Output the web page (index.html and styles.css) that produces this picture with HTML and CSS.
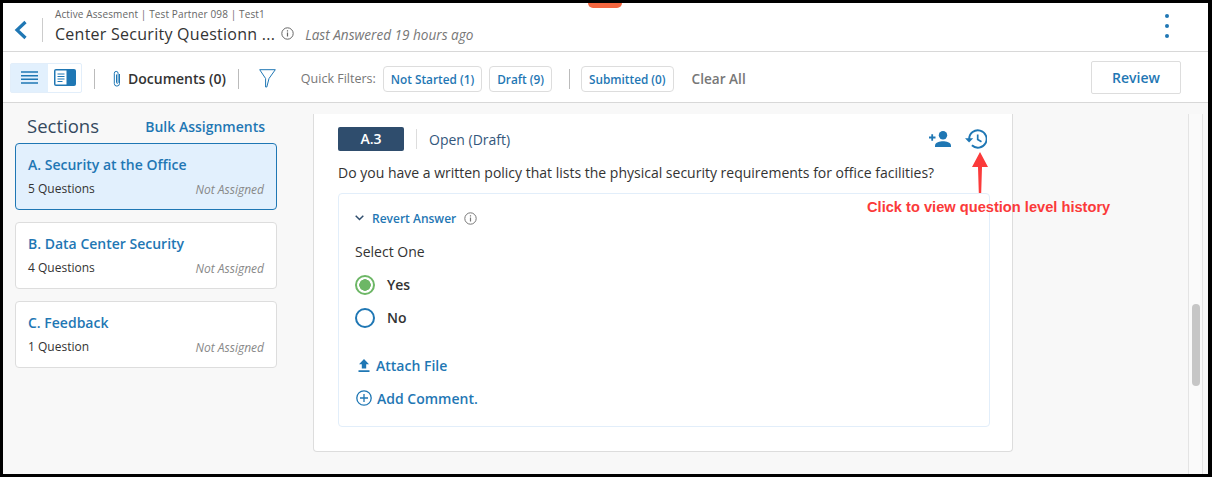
FILE: index.html
```html
<!DOCTYPE html>
<html lang="en">
<head>
    <meta charset="UTF-8">
    <title>Center Security Questionnaire</title>
    <link rel="stylesheet" href="styles.css">
</head>
<body>
    <div class="screen">
        <div class="notch"></div>

        <!-- Top header -->
        <header class="header">
            <svg class="back" width="14" height="20" viewBox="0 0 14 20"><path d="M11.5 2 3 10l8.500 8" fill="none" stroke="#1f77b4" stroke-width="3.200"/></svg>
            <div class="header-text">
                <div class="crumbs">Active Assesment | Test Partner 098 | Test1</div>
                <div class="title-row">
                    <span class="title">Center Security Questionn ...</span>
                    <svg class="info" width="13" height="13" viewBox="0 0 13 13"><circle cx="6.500" cy="6.500" r="5.700" fill="none" stroke="#666" stroke-width="1"/><path d="M6.500 5.600v4M6.500 3.200v1.300" stroke="#666" stroke-width="1.200"/></svg>
                    <span class="last-answered">Last Answered 19 hours ago</span>
                </div>
            </div>
            <div class="kebab"><i></i><i></i><i></i></div>
        </header>

        <!-- Toolbar -->
        <div class="toolbar">
            <div class="view-toggle">
                <div class="view-list">
                    <svg width="17" height="13" viewBox="0 0 17 13"><path d="M0 1h17M0 4.700h17M0 8.300h17M0 12h17" stroke="#1f77b4" stroke-width="1.400"/></svg>
                </div>
                <div class="view-split">
                    <svg width="22" height="17" viewBox="0 0 22 17"><rect width="22" height="17" rx="2" fill="#1f77b4"/><rect x="1.500" y="1.500" width="11" height="14" fill="#fff"/><path d="M3.500 5h7M3.500 7.500h7M3.500 10h7M3.500 12.500h5" stroke="#1f77b4"/></svg>
                </div>
            </div>
            <span class="sep sep-docs"></span>
            <svg class="clip" width="10" height="18" viewBox="0 0 10 18"><path d="M7.500 4v9.500a2.600 2.600 0 0 1-5.200 0V3.300a1.900 1.900 0 0 1 3.800 0v9.200a.8.8 0 0 1-1.600 0V4.500" fill="none" stroke="#1f77b4" stroke-width="1"/></svg>
            <span class="documents">Documents (0)</span>
            <span class="sep sep-funnel"></span>
            <svg class="funnel" width="17" height="19" viewBox="0 0 17 19"><path d="M.7.700h15.600L10 9.500 7.800 18H6.600V9.500z" fill="none" stroke="#1f77b4" stroke-width="1"/></svg>
            <span class="filters-label">Quick Filters:</span>
            <button class="chip">Not Started (1)</button>
            <button class="chip">Draft (9)</button>
            <span class="sep sep-submitted"></span>
            <button class="chip">Submitted (0)</button>
            <span class="clear-all">Clear All</span>
            <button class="review">Review</button>
        </div>

        <div class="content">
            <!-- Sections column -->
            <aside class="sidebar">
                <div class="sidebar-head">
                    <span class="sections-title">Sections</span>
                    <span class="bulk">Bulk Assignments</span>
                </div>
                <div class="section-card active">
                    <div class="section-name">A. Security at the Office</div>
                    <div class="section-meta"><span>5 Questions</span><em>Not Assigned</em></div>
                </div>
                <div class="section-card">
                    <div class="section-name">B. Data Center Security</div>
                    <div class="section-meta"><span>4 Questions</span><em>Not Assigned</em></div>
                </div>
                <div class="section-card">
                    <div class="section-name">C. Feedback</div>
                    <div class="section-meta"><span>1 Question</span><em>Not Assigned</em></div>
                </div>
            </aside>

            <!-- Question card -->
            <main class="question">
                <div class="question-head">
                    <span class="badge">A.3</span>
                    <span class="status">Open (Draft)</span>
                    <svg class="assign" width="22" height="16" viewBox="0 0 22 16"><circle cx="14" cy="4.300" r="4.200" fill="#1f77b4"/><path d="M6 16v-1.500c0-3 5-4.300 8-4.300s8 1.300 8 4.300V16z" fill="#1f77b4"/><path d="M0 6.500h6.500M3.200 3.300v6.500" stroke="#1f77b4" stroke-width="1.800"/></svg>
                    <svg class="history" width="22" height="20" viewBox="0 0 22 20"><path d="M4.200 10a8.700 8.700 0 1 1 2.700 6.300" fill="none" stroke="#1f77b4" stroke-width="1.900"/><path d="M0 9.300h8.200L4.100 13.600z" fill="#1f77b4"/><path d="M12.700 5.500v5l3.800 2.300" fill="none" stroke="#1f77b4" stroke-width="1.700"/></svg>
                </div>
                <p class="question-text">Do you have a written policy that lists the physical security requirements for office facilities?</p>
                <div class="answer">
                    <div class="revert">
                        <svg width="9" height="6" viewBox="0 0 9 6"><path d="M.7.800 4.500 4.500 8.300.8" fill="none" stroke="#2f4d6d" stroke-width="1.500"/></svg>
                        <span>Revert Answer</span>
                        <svg class="info" width="13" height="13" viewBox="0 0 13 13"><circle cx="6.500" cy="6.500" r="5.700" fill="none" stroke="#777" stroke-width="1"/><path d="M6.500 5.600v4M6.500 3.200v1.300" stroke="#777" stroke-width="1.200"/></svg>
                    </div>
                    <div class="select-one">Select One</div>
                    <label class="option"><span class="radio checked"></span>Yes</label>
                    <label class="option"><span class="radio"></span>No</label>
                    <div class="action attach">
                        <svg width="12" height="13" viewBox="0 0 12 13"><path d="M6 0l5 5.300H8.200v4.200H3.800V5.300H1zM.5 11.300h11V13H.5z" fill="#1f77b4"/></svg>
                        <span>Attach File</span>
                    </div>
                    <div class="action comment">
                        <svg width="16" height="16" viewBox="0 0 16 16"><circle cx="8" cy="8" r="7.200" fill="none" stroke="#1f77b4" stroke-width="1.300"/><path d="M8 4v8M4 8h8" stroke="#1f77b4" stroke-width="1.300"/></svg>
                        <span>Add Comment.</span>
                    </div>
                </div>
            </main>

            <div class="scroll-track"><div class="scroll-thumb"></div></div>
        </div>

        <!-- Red annotation over the screenshot -->
        <svg class="note-arrow" width="18" height="41" viewBox="0 0 18 41"><path d="M9 0l8 15H11l-.800 26H7.800L7 15H1z" fill="#fb3a3a"/></svg>
        <div class="note-text">Click to view question level history</div>
    </div>
</body>
</html>
```

FILE: styles.css
```css
* {
    box-sizing: border-box;
}

body {
    margin: 0;
    background: #000;
    font-family: "Open Sans", sans-serif;
    color: #333;
}

.screen {
    position: relative;
    width: 1212px;
    height: 477px;
    border: 3px solid #000;
    border-right-width: 4px;
    background: #f8f8f8;
    overflow: hidden;
    display: flex;
    flex-direction: column;
}

.notch {
    position: absolute;
    left: 585px;
    top: 0;
    width: 34px;
    height: 5px;
    background: #f4663f;
    border-radius: 0 0 6px 6px;
}

/* header */
.header {
    height: 49px;
    flex: none;
    display: flex;
    align-items: center;
    background: #fff;
    border-bottom: 1px solid #d8d8d8;
}

.back {
    margin: 5px 0 0 11px;
}

.header-text {
    margin-left: 14px;
    padding-left: 12px;
    border-left: 1px solid #ccc;
    height: 24px;
    display: flex;
    flex-direction: column;
    justify-content: center;
    margin-top: 5px;
}

.crumbs {
    font-size: 10px;
    line-height: 14px;
    color: #666;
    margin-top: -8px;
    letter-spacing: 0.12px;
}

.title-row {
    display: flex;
    align-items: center;
    margin-top: 2px;
}

.title {
    font-size: 16px;
    line-height: 22px;
    color: #333;
    letter-spacing: 0.26px;
}

.title-row .info {
    margin-left: 6px;
}

.last-answered {
    margin-left: 11px;
    font-size: 13.600px;
    font-style: italic;
    color: #777;
    margin-top: 2px;
}

.kebab {
    margin-left: auto;
    margin-right: 39px;
    margin-top: -2px;
    display: flex;
    flex-direction: column;
    gap: 6px;
}

.kebab i {
    width: 4px;
    height: 4px;
    border-radius: 50%;
    background: #1f77b4;
}

/* toolbar */
.toolbar {
    height: 51px;
    flex: none;
    display: flex;
    align-items: center;
    background: #fff;
    border-bottom: 1px solid #d8d8d8;
    padding: 3px 0 0 7px;
}

.view-toggle {
    display: flex;
    width: 72px;
    height: 30px;
    margin-top: -2px;
    border: 1px solid #e2eefa;
    border-radius: 2px;
}

.view-list {
    width: 37px;
    background: #e2f0fd;
    display: flex;
    align-items: center;
    justify-content: center;
}

.view-split {
    flex: 1;
    display: flex;
    align-items: center;
    justify-content: center;
}

.sep {
    width: 1px;
    height: 20px;
    background: #bbb;
    flex: none;
}

.sep-docs {
    margin-left: 12px;
}

.clip {
    margin-left: 17px;
}

.documents {
    margin-left: 6px;
    font-size: 14px;
    font-weight: 600;
    color: #333;
}

.sep-funnel {
    margin-left: 12px;
}

.funnel {
    margin-left: 20px;
}

.filters-label {
    margin-left: 25px;
    font-size: 12.500px;
    color: #777;
}

.chip {
    height: 26px;
    padding: 0 7px;
    margin-left: 7px;
    background: #fff;
    border: 1px solid #ddd;
    border-radius: 4px;
    font-family: inherit;
    font-size: 11.800px;
    font-weight: 600;
    color: #1f77b4;
}

.sep-submitted {
    margin-left: 17px;
    margin-right: 4px;
}

.clear-all {
    margin-left: 18px;
    font-size: 13.600px;
    font-weight: 600;
    color: #777;
}

.review {
    margin-left: auto;
    margin-right: 27px;
    width: 90px;
    height: 33px;
    margin-top: -3px;
    background: #fff;
    border: 1px solid #ddd;
    border-radius: 2px;
    font-family: inherit;
    font-size: 14px;
    font-weight: 600;
    color: #1f77b4;
}

/* main area */
.content {
    flex: 1;
    display: flex;
    min-height: 0;
}

.sidebar {
    width: 310px;
    flex: none;
    padding: 7px 0 0 12px;
}

.sidebar-head {
    width: 262px;
    height: 31px;
    margin-bottom: 2px;
    display: flex;
    align-items: center;
    justify-content: space-between;
    padding: 0 12px;
}

.sections-title {
    font-size: 18.500px;
    font-weight: 500;
    color: #34495e;
}

.bulk {
    font-size: 14px;
    font-weight: 600;
    color: #1f77b4;
    margin-top: 2px;
}

.section-card {
    width: 262px;
    height: 67px;
    margin-bottom: 12px;
    padding: 11px 12px 0;
    background: #fff;
    border: 1px solid #ddd;
    border-radius: 4px;
}

.section-card.active {
    background: #e2f0fd;
    border-color: #1f77b4;
}

.section-name {
    font-size: 14px;
    font-weight: 600;
    color: #1f77b4;
    line-height: 20px;
}

.section-meta {
    display: flex;
    justify-content: space-between;
    margin-top: 5px;
    font-size: 12px;
    line-height: 18px;
}

.section-meta em {
    color: #888;
    margin-top: 1px;
}

.question {
    width: 700px;
    height: 338px;
    margin-top: 11px;
    flex: none;
    background: #fff;
    border: 1px solid #ddd;
    border-top: 0;
    border-radius: 0 0 4px 4px;
    padding: 13px 24px 0;
}

.question-head {
    display: flex;
    align-items: center;
    height: 24px;
}

.badge {
    width: 66px;
    height: 24px;
    background: #2f4d6d;
    border-radius: 2px;
    color: #fff;
    font-size: 14px;
    font-weight: 600;
    line-height: 23px;
    text-align: center;
}

.status {
    margin-left: 12px;
    padding-left: 12px;
    border-left: 1px solid #ddd;
    height: 20px;
    font-size: 14px;
    line-height: 22px;
    color: #34577c;
}

.assign {
    margin-left: auto;
    margin-right: -1px;
}

.history {
    margin-left: 15px;
    margin-right: 1px;
}

.question-text {
    margin: 12px 0 0;
    font-size: 14px;
    line-height: 20px;
    color: #333;
}

.answer {
    width: 652px;
    height: 234px;
    margin-top: 10px;
    padding: 15px 16px 0;
    border: 1px solid #e2eefa;
    border-radius: 4px;
}

.revert {
    display: flex;
    align-items: center;
    height: 18px;
    font-size: 12px;
    font-weight: 600;
    color: #1f77b4;
}

.revert span {
    margin-left: 8px;
}

.revert .info {
    margin-left: 8px;
}

.select-one {
    margin-top: 15px;
    font-size: 14px;
    line-height: 20px;
}

.option {
    display: flex;
    align-items: flex-start;
    height: 20px;
    margin-top: 13px;
    font-size: 14px;
    font-weight: 600;
    line-height: 20px;
}

.radio {
    width: 20px;
    height: 20px;
    margin-right: 12px;
    border: 2px solid #1f77b4;
    border-radius: 50%;
    background: #fff;
}

.radio.checked {
    border-color: #6db766;
    background: radial-gradient(circle, #6db766 0 5.500px, #fff 6px);
}

.action {
    display: flex;
    align-items: center;
    font-size: 14px;
    font-weight: 600;
    color: #1f77b4;
    height: 20px;
}

.attach {
    margin-top: 27px;
    padding-left: 3px;
    gap: 6px;
}

.comment {
    margin-top: 13px;
    padding-left: 1px;
    gap: 5px;
}

.scroll-track {
    width: 15px;
    margin: 11px 0 0 175px;
    background: #fafafa;
    border-left: 1px solid #e4e4e4;
    border-right: 1px solid #e4e4e4;
}

.scroll-thumb {
    width: 8px;
    height: 82px;
    margin: 190px 0 0 3px;
    background: #c6c6c6;
    border-radius: 4px;
}

/* annotation */
.note-arrow {
    position: absolute;
    left: 968px;
    top: 149px;
}

.note-text {
    position: absolute;
    left: 864px;
    top: 196px;
    font-family: "Liberation Sans", sans-serif;
    font-size: 14.650px;
    font-weight: bold;
    line-height: 16px;
    color: #fb3a3a;
}
```
